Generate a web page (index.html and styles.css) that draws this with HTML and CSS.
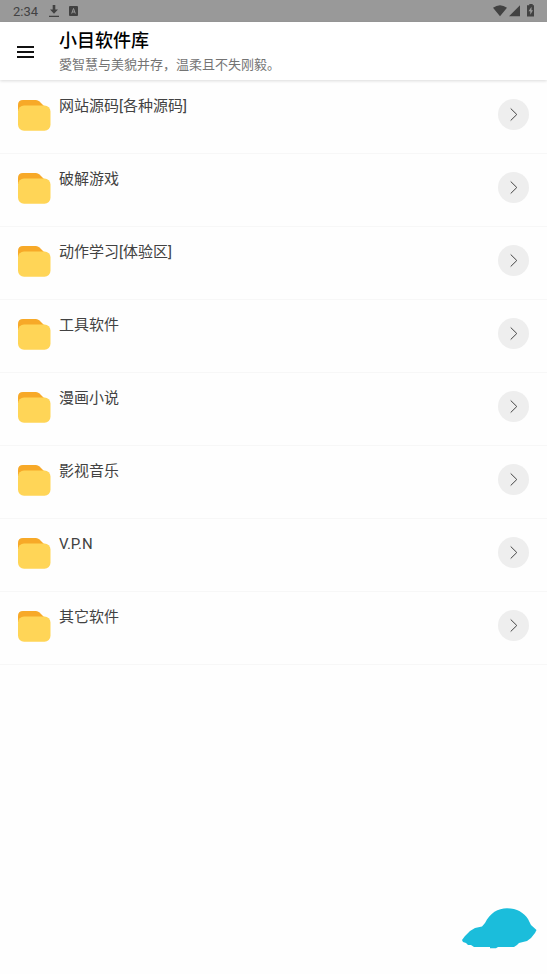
FILE: index.html
```
<!DOCTYPE html>
<html lang="zh-CN">
<head>
<meta charset="utf-8">
<meta name="viewport" content="width=device-width, initial-scale=1">
<title>小目软件库</title>
<link rel="stylesheet" href="styles.css">
</head>
<body>
<svg class="defs" aria-hidden="true">
  <symbol id="folder" viewBox="0 0 33 32">
    <path fill="#f7a928" d="M0 12V6Q0 1 5 1H18Q20 1 21.500 2.500L27 8V12Z"/>
    <rect y="6.500" width="32.500" height="25.200" rx="6" fill="#ffd557"/>
  </symbol>
  <symbol id="chevron" viewBox="0 0 31 31">
    <path d="M12.700 9.500L18.800 15.500L12.700 21.500" fill="none" stroke="#444" stroke-width="1"/>
  </symbol>
</svg>
<div class="status">
  <span class="time">2:34</span>
  <svg width="12" height="14" viewBox="0 0 12 14"><path fill="#424242" d="M4.700 1H7.300V5.500H10L6 9.700L2 5.500H4.700ZM1 11.700H11V13H1Z"/></svg>
  <svg class="badge" width="9" height="10" viewBox="0 0 9 10"><rect width="9" height="10" rx="1" fill="#424242"/><path d="M2.700 7.500L4.500 2.500L6.300 7.500M3.300 6H5.700" fill="none" stroke="#999" stroke-width="1"/></svg>
  <svg class="signals" width="42" height="14" viewBox="0 0 42 14">
    <path fill="#424242" d="M0 3.800Q7 -1.500 14 3.800L7 12.300ZM16 12.300L27 1.300V12.300Z"/>
    <path fill="#424242" d="M36.300 0H39.700V1.200H41V12.500H34V1.200H36.300Z"/>
    <path fill="#999" d="M38.500 2.800L35.500 7.200H37.300V10.700L40 6.200H38.500Z"/>
  </svg>
</div>
<header class="bar">
  <button class="menu" type="button" aria-label="菜单"><svg width="18" height="12" viewBox="0 0 18 12"><path d="M0 1H17M0 6H17M0 11H17" stroke="#111" stroke-width="2"/></svg></button>
  <div>
    <h1>小目软件库</h1>
    <p>愛智慧与美貌并存，温柔且不失刚毅。</p>
  </div>
</header>
<main>
  <ul class="list">
    <li><a href="#"><svg class="folder"><use href="#folder"/></svg><span class="name">网站源码[各种源码]</span><svg class="go"><use href="#chevron"/></svg></a></li>
    <li><a href="#"><svg class="folder"><use href="#folder"/></svg><span class="name">破解游戏</span><svg class="go"><use href="#chevron"/></svg></a></li>
    <li><a href="#"><svg class="folder"><use href="#folder"/></svg><span class="name">动作学习[体验区]</span><svg class="go"><use href="#chevron"/></svg></a></li>
    <li><a href="#"><svg class="folder"><use href="#folder"/></svg><span class="name">工具软件</span><svg class="go"><use href="#chevron"/></svg></a></li>
    <li><a href="#"><svg class="folder"><use href="#folder"/></svg><span class="name">漫画小说</span><svg class="go"><use href="#chevron"/></svg></a></li>
    <li><a href="#"><svg class="folder"><use href="#folder"/></svg><span class="name">影视音乐</span><svg class="go"><use href="#chevron"/></svg></a></li>
    <li><a href="#"><svg class="folder"><use href="#folder"/></svg><span class="name">V.P.N</span><svg class="go"><use href="#chevron"/></svg></a></li>
    <li><a href="#"><svg class="folder"><use href="#folder"/></svg><span class="name">其它软件</span><svg class="go"><use href="#chevron"/></svg></a></li>
  </ul>
</main>
<svg class="float" viewBox="0 0 75 41" aria-hidden="true"><path fill="#1bbddb" d="M0 32L3 28L8 23L13 20L20 18.500L23 15C28 5 36 .3 45 .3C55 .3 62 5 66 11L69 17L74.500 22L73 25L69 30L65 33L61 34L57 35L55 37L52 39H36L34 40.300H28V39H12L9 37H6L4 35L1 34Z"/></svg>
</body>
</html>
```
FILE: styles.css
```
* {
  box-sizing: border-box;
}

body {
  margin: 0;
  min-height: 100vh;
  background: #fefefe;
  font-family: Roboto, "Noto Sans CJK SC", sans-serif;
}

svg {
  display: block;
  flex: none;
}

.defs {
  position: absolute;
  width: 0;
  height: 0;
}

.status {
  display: flex;
  align-items: center;
  height: 22px;
  padding: 0 12px 0 13px;
  background: #999;
  color: #424242;
}

.time {
  margin-right: 10px;
  font-size: 13px;
  font-weight: 400;
}

.badge {
  margin-left: 9px;
}

.signals {
  margin-left: auto;
}

.bar {
  display: flex;
  align-items: center;
  height: 58px;
  padding-top: 2px;
  background: #fff;
  box-shadow: 0 1px 3px rgba(0, 0, 0, 0.14);
}

.menu {
  display: flex;
  align-items: center;
  width: 59px;
  height: 48px;
  padding: 0 0 0 17px;
  border: 0;
  background: none;
}

h1,
p {
  margin: 0;
}

h1 {
  color: #000;
  font-size: 18px;
  font-weight: 500;
  line-height: 26px;
}

p {
  color: #747474;
  font-size: 13px;
  line-height: 22px;
}

.list {
  margin: 0;
  padding: 1px 0 0;
  list-style: none;
}

.list a {
  display: flex;
  align-items: flex-start;
  height: 73px;
  padding: 14px 18px 0;
  border-bottom: 1px solid #f7f7f7;
  color: #424242;
  text-decoration: none;
}

.folder {
  width: 33px;
  height: 32px;
  margin-top: 4px;
}

.name {
  flex: 1;
  margin-left: 8px;
  font-size: 15px;
  line-height: 22px;
}

.go {
  width: 31px;
  height: 31px;
  margin-top: 4px;
  border-radius: 50%;
  background: #eee;
}

.float {
  position: fixed;
  right: 10px;
  bottom: 25px;
  width: 75px;
  height: 41px;
}
```
